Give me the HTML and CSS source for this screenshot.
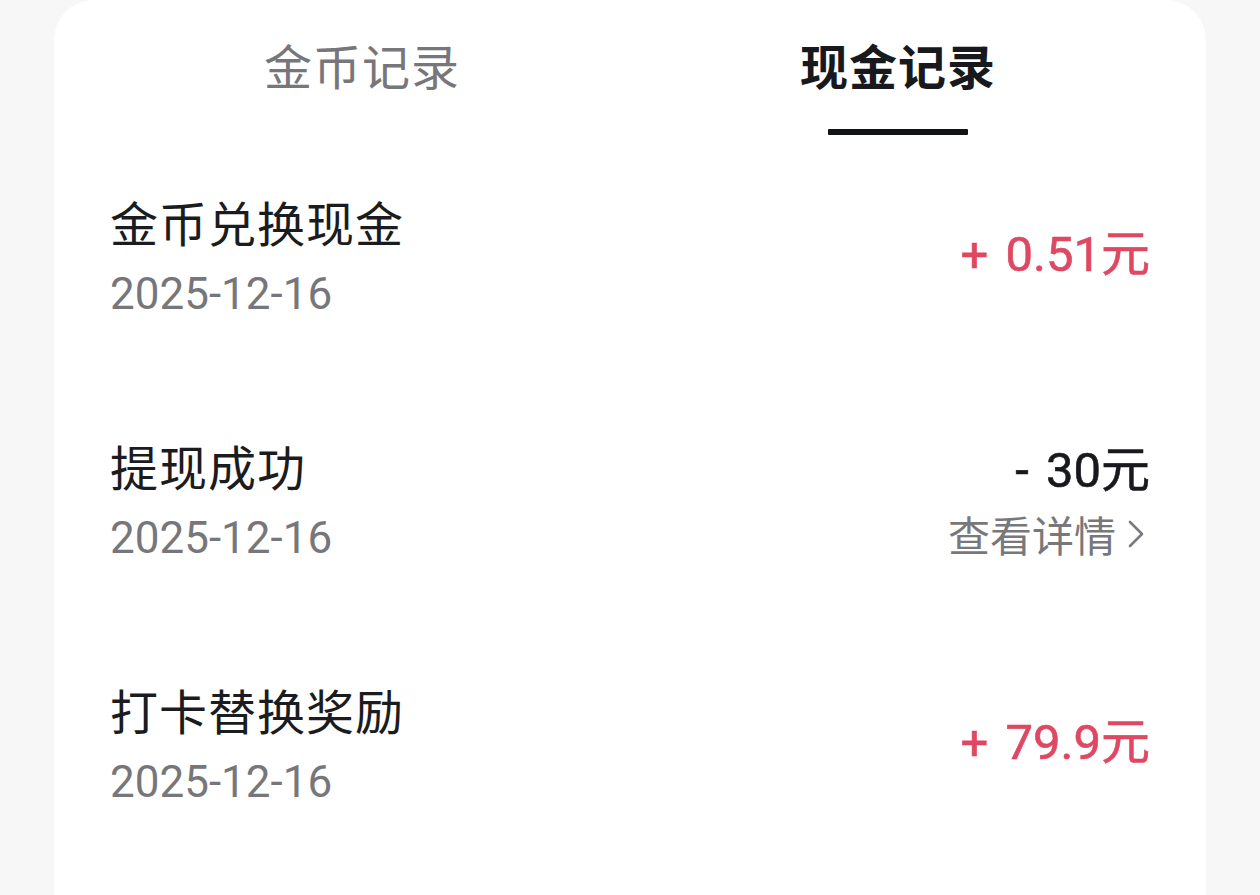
FILE: index.html
```html
<!DOCTYPE html>
<html lang="zh-CN">
<head>
<meta charset="utf-8">
<link rel="stylesheet" href="styles.css">
</head>
<body>
<div class="card">
  <div class="tabs">
    <div class="tab"><span class="tab-text">金币记录</span></div>
    <div class="tab active"><span class="tab-text">现金记录</span><span class="bar"></span></div>
  </div>
  <div class="list">
    <div class="row">
      <div class="left">
        <div class="title">金币兑换现金</div>
        <div class="date">2025-12-16</div>
      </div>
      <div class="right">
        <div class="amount plus">+ 0.51元</div>
      </div>
    </div>
    <div class="row">
      <div class="left">
        <div class="title">提现成功</div>
        <div class="date">2025-12-16</div>
      </div>
      <div class="right">
        <div class="amount minus">- 30元</div>
        <div class="detail">查看详情<svg class="chev" viewBox="0 0 16 28" width="16" height="28"><path d="M2 2 L14 14 L2 26" fill="none" stroke="#7a7a7e" stroke-width="2.6" stroke-linecap="round" stroke-linejoin="round"/></svg></div>
      </div>
    </div>
    <div class="row">
      <div class="left">
        <div class="title">打卡替换奖励</div>
        <div class="date">2025-12-16</div>
      </div>
      <div class="right">
        <div class="amount plus">+ 79.9元</div>
      </div>
    </div>
  </div>
</div>
</body>
</html>
```
FILE: styles.css
```css
html, body {
  margin: 0;
  padding: 0;
  height: 100%;
  background: #f7f7f7;
  font-family: "Noto Sans CJK SC", "Noto Sans", sans-serif;
}
.card {
  margin-left: 54px;
  width: 1152px;
  height: 100%;
  background: #ffffff;
  border-radius: 40px 40px 0 0;
  box-sizing: border-box;
}
.tabs {
  display: flex;
  padding: 0 40px;
  height: 139px;
}
.tab {
  flex: 1;
  display: flex;
  flex-direction: column;
  align-items: center;
  padding-top: 16px;
}
.tab-text {
  font-size: 48px;
  line-height: 96px;
  color: #77777b;
  letter-spacing: 1px;
}
.tab.active .tab-text {
  color: #18191d;
  font-weight: 700;
}
.bar {
  margin-top: 17px;
  width: 140px;
  height: 6px;
  background: #121316;
  border-radius: 1px;
}
.row {
  display: flex;
  justify-content: space-between;
  align-items: center;
  padding: 46px 56px 53px;
}
.left {
  display: flex;
  flex-direction: column;
}
.title {
  font-size: 48px;
  line-height: 72px;
  color: #1b1c20;
  letter-spacing: 1px;
}
.date {
  font-family: "Roboto", "Noto Sans CJK SC", sans-serif;
  font-size: 44px;
  line-height: 72px;
  color: #77777b;
  margin-top: 1px;
}
.right {
  display: flex;
  flex-direction: column;
  align-items: flex-end;
}
.amount {
  font-family: "Roboto", "Noto Sans CJK SC", sans-serif;
  font-size: 49px;
  line-height: 62px;
  font-weight: 400;
  white-space: pre;
  word-spacing: 5px;
  -webkit-text-stroke: 0.6px currentColor;
}
.amount.plus {
  color: #df4862;
  margin-bottom: 6px;
}
.amount.minus {
  color: #18191d;
  margin-bottom: 2px;
}
.detail {
  display: flex;
  align-items: center;
  font-size: 42px;
  line-height: 60px;
  color: #78787c;
  margin-right: 6px;
}
.chev {
  margin-left: 12px;
}
```
